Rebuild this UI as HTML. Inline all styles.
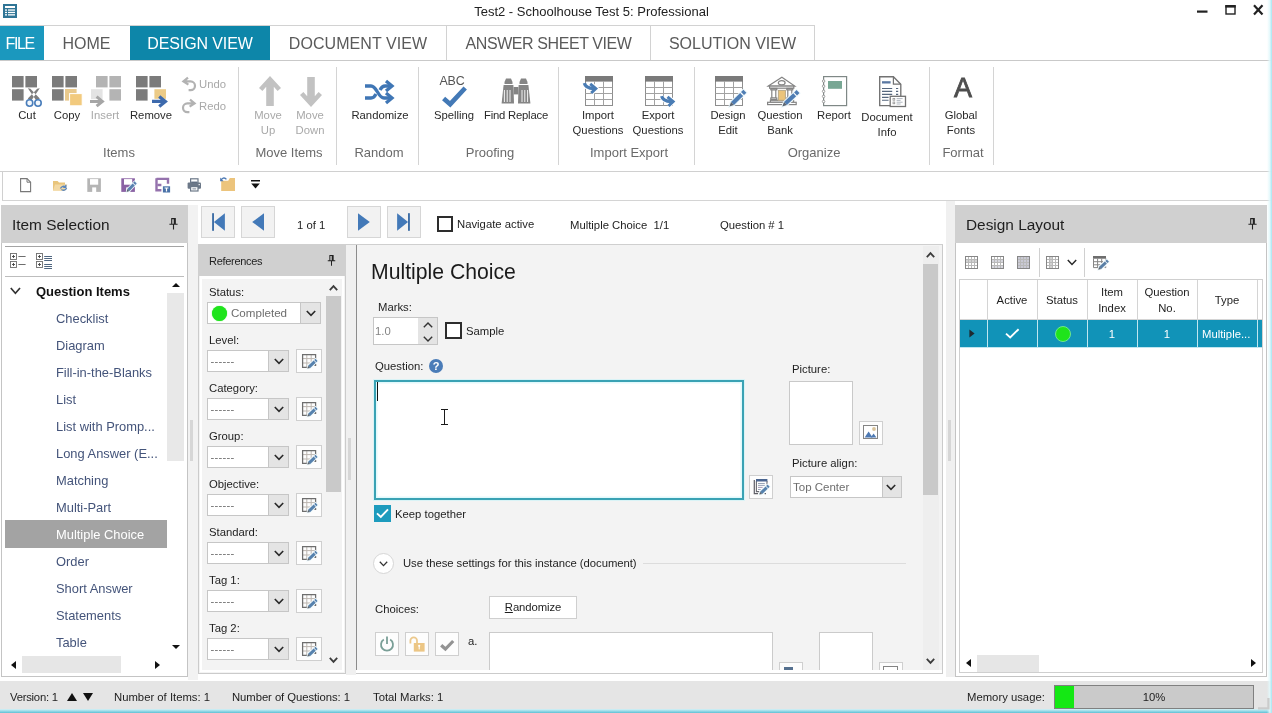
<!DOCTYPE html>
<html lang="en">
<head>
<meta charset="utf-8">
<title>Test2 - Schoolhouse Test 5: Professional</title>
<style>
*{box-sizing:border-box;margin:0;padding:0}
html,body{width:1272px;height:713px;overflow:hidden;background:#fff}
body{font-family:"Liberation Sans",sans-serif;font-size:11.3px;color:#1e1e1e;position:relative;will-change:transform}
.a{position:absolute}
.t{position:absolute;white-space:nowrap;line-height:16px;height:16px}
.c{text-align:center}
svg{position:absolute;overflow:visible}
/* ---------- title / tabs ---------- */
#title{left:0;top:4px;width:1183px;text-align:center;font-size:13px;color:#222}
.tab{position:absolute;top:26px;height:34px;line-height:36px;font-size:16px;color:#5a5a5a;text-align:center;white-space:nowrap}
.tabb{border-top:1px solid #d2d2d2;border-right:1px solid #d2d2d2;top:25px;height:36px;line-height:35px}
/* ---------- ribbon ---------- */
.gsep{position:absolute;top:67px;width:1px;height:98px;background:#d4d4d4}
.glab{position:absolute;top:145px;height:16px;line-height:16px;font-size:13px;color:#6a6a6a;text-align:center;white-space:nowrap}
.rl{position:absolute;margin-top:1px;font-size:11.3px;line-height:15px;color:#2a2a2a;text-align:center;white-space:nowrap}
.dis{color:#a9a9a9}
/* ---------- panels ---------- */
.phead{position:absolute;background:#d0d0d0}
.li{position:absolute;left:56px;font-size:12.9px;line-height:18px;height:18px;color:#44547a;white-space:nowrap}
.lab{position:absolute;font-size:11.3px;line-height:14px;white-space:nowrap;color:#1e1e1e}
.combo{position:absolute;height:22px;background:#fff;border:1px solid #c6c6c6}
.combo i{position:absolute;right:0;top:0;bottom:0;width:20px;background:#e4e4e4;border-left:1px solid #c6c6c6}
.combo span{position:absolute;left:6px;top:3px;line-height:14px;font-size:11.3px;color:#6e6e6e;white-space:nowrap}
.btn{position:absolute;width:24px;height:24px;background:#fdfdfd;border:1px solid #cfcfcf}
.nav{position:absolute;top:206px;width:34px;height:32px;background:#f2f2f2;border:1px solid #d6d6d6}
.st{position:absolute;top:689px;line-height:16px;font-size:11.3px;color:#1e1e1e;white-space:nowrap}
</style>
</head>
<body>
<!-- ================= TITLE BAR ================= -->
<div id="titlebar">
<svg class="a" style="left:3px;top:4px" width="14" height="14" viewBox="0 0 14 14"><rect width="14" height="14" fill="#2f7596"/><rect x="2" y="2" width="10" height="2" fill="#fff"/><rect x="2" y="5.4" width="2" height="1.3" fill="#fff"/><rect x="5" y="5.4" width="7" height="1.3" fill="#fff"/><rect x="2" y="7.8" width="2" height="1.3" fill="#fff"/><rect x="5" y="7.8" width="7" height="1.3" fill="#fff"/><rect x="2" y="10.2" width="2" height="1.3" fill="#fff"/><rect x="5" y="10.2" width="7" height="1.3" fill="#fff"/></svg>
<div class="t" id="title">Test2 - Schoolhouse Test 5: Professional</div>
<svg class="a" style="left:1196px;top:4px" width="70" height="12" viewBox="0 0 70 12"><rect x="1" y="6.5" width="10.5" height="2.2" fill="#222"/><rect x="30" y="2" width="9" height="8" fill="none" stroke="#222" stroke-width="1.4"/><rect x="29.3" y="1" width="10.4" height="2.6" fill="#222"/><path d="M58 1.2 L66.5 10.5 M66.5 1.2 L58 10.5" stroke="#222" stroke-width="2.2" fill="none"/></svg>
</div>
<!-- ================= TABS ================= -->
<div id="tabs">
<div class="a" style="left:0;top:25px;width:815px;height:1px;background:#d2d2d2"></div>
<div class="tab" style="left:0;width:44px;background:#1b98be;color:#fff;text-align:left;padding-left:5.5px;letter-spacing:-1.35px">FILE</div>
<div class="tab" style="left:44px;width:85px">HOME</div>
<div class="tab" style="left:130px;width:140px;background:#0d86a9;color:#fff;letter-spacing:-.12px">DESIGN VIEW</div>
<div class="tab tabb" style="left:270px;width:177px;letter-spacing:.07px">DOCUMENT VIEW</div>
<div class="tab tabb" style="left:447px;width:204px;letter-spacing:-.42px">ANSWER SHEET VIEW</div>
<div class="tab tabb" style="left:651px;width:164px">SOLUTION VIEW</div>
<div class="a" style="left:0;top:60px;width:1272px;height:1px;background:#c9c9c9"></div>
</div>
<!-- ================= RIBBON ================= -->
<div id="ribbon">
<!-- Items group -->
<svg style="left:12px;top:76px" width="32" height="32" viewBox="0 0 32 32"><g fill="#7b7b7b"><rect x="0" y="0" width="11.6" height="11.4"/><rect x="13.4" y="0" width="11.6" height="11.4"/><rect x="0" y="13.2" width="11.6" height="11.4"/></g><path d="M15.8 12.2 L18.4 12.8 L27.8 22.6 L24.6 25 Z M27.8 12.2 L25.2 12.8 L15.8 22.6 L19 25 Z" fill="#7d7d7d"/><circle cx="17.6" cy="27" r="3.2" fill="#f4f8fc" stroke="#4a7ebb" stroke-width="1.6"/><circle cx="26" cy="27" r="3.2" fill="#f4f8fc" stroke="#4a7ebb" stroke-width="1.6"/></svg>
<div class="rl" style="left:7px;top:107px;width:40px">Cut</div>
<svg style="left:52px;top:76px" width="32" height="32" viewBox="0 0 32 32"><g fill="#7b7b7b"><rect x="0" y="0" width="11.6" height="11.4"/><rect x="13.4" y="0" width="11.6" height="11.4"/><rect x="0" y="13.2" width="11.6" height="11.4"/></g><rect x="13" y="13" width="11.6" height="11.6" fill="#e9c98c"/><rect x="17.6" y="17.6" width="12.6" height="12.2" fill="#f2ca7e" stroke="#fff" stroke-width="1"/></svg>
<div class="rl" style="left:47px;top:107px;width:40px">Copy</div>
<svg style="left:90px;top:76px" width="32" height="32" viewBox="0 0 32 32"><g fill="#b4b4b4"><rect x="6" y="0" width="11.6" height="11.4"/><rect x="19.4" y="0" width="11.6" height="11.4"/><rect x="19.4" y="13.2" width="11.6" height="11.4"/></g><rect x="1" y="13.2" width="11.6" height="10" fill="#e3e3e3"/><path d="M0 25.4 H10 M6.6 20.6 L12.4 25.4 L6.6 30.2" stroke="#a6a6a6" stroke-width="3" fill="none"/></svg>
<div class="rl dis" style="left:85px;top:107px;width:40px">Insert</div>
<svg style="left:136px;top:76px" width="32" height="32" viewBox="0 0 32 32"><g fill="#7b7b7b"><rect x="0" y="0" width="11.6" height="11.4"/><rect x="13.4" y="0" width="11.6" height="11.4"/><rect x="0" y="13.2" width="11.6" height="11.4"/></g><rect x="18.4" y="13.2" width="11.6" height="9.6" fill="#eccb87"/><path d="M16 25.4 H27 M23.2 20.4 L29.4 25.4 L23.2 30.4" stroke="#3d6aad" stroke-width="3.2" fill="none"/></svg>
<div class="rl" style="left:126px;top:107px;width:50px">Remove</div>
<svg style="left:182px;top:77px" width="15" height="14" viewBox="0 0 15 14"><path d="M6 0.6 L1.4 4.4 L6.4 7.6 M1.8 4.4 H8.6 A4.4 4.4 0 0 1 8.6 13.2 H6.6" stroke="#b2b2b2" stroke-width="2.2" fill="none"/></svg>
<div class="rl dis" style="left:199px;top:76px;text-align:left">Undo</div>
<svg style="left:181px;top:99px" width="15" height="14" viewBox="0 0 15 14"><path d="M9 0.6 L13.6 4.4 L8.6 7.6 M13.2 4.4 H6.4 A4.4 4.4 0 0 0 6.4 13.2 H8.4" stroke="#b2b2b2" stroke-width="2.2" fill="none"/></svg>
<div class="rl dis" style="left:199px;top:98px;text-align:left">Redo</div>
<div class="glab" style="left:89px;width:60px">Items</div>
<div class="gsep" style="left:238px"></div>
<!-- Move Items group -->
<svg style="left:258px;top:76px" width="24" height="31" viewBox="0 0 24 31"><path d="M12 0 L23 12 L19.6 15 L15.8 10.8 V30 H8.2 V10.8 L4.4 15 L1 12 Z" fill="#c2c2c2"/></svg>
<div class="rl dis" style="left:248px;top:107px;width:40px">Move<br>Up</div>
<svg style="left:299px;top:76px" width="24" height="31" viewBox="0 0 24 31"><path d="M12 31 L23 19 L19.6 16 L15.8 20.2 V1 H8.2 V20.2 L4.4 16 L1 19 Z" fill="#c2c2c2"/></svg>
<div class="rl dis" style="left:290px;top:107px;width:40px">Move<br>Down</div>
<div class="glab" style="left:249px;width:80px">Move Items</div>
<div class="gsep" style="left:336px"></div>
<!-- Random group -->
<svg style="left:365px;top:80px" width="30" height="24" viewBox="0 0 30 24"><g stroke="#3f76b5" stroke-width="3.3" fill="none"><path d="M0 6 H6 C12 6 13 18 19 18 H26"/><path d="M0 18 H6 C8.5 18 10 16 11 14 M15 10 C16 8 17.5 6 20 6 H26"/><path d="M21 1 L27 6 L21 11"/><path d="M21 13 L27 18 L21 23"/></g></svg>
<div class="rl" style="left:345px;top:107px;width:70px">Randomize</div>
<div class="glab" style="left:349px;width:60px">Random</div>
<div class="gsep" style="left:418px"></div>
<!-- Proofing group -->
<div class="t" style="left:436px;top:73px;width:32px;text-align:center;font-size:12.4px;color:#555;letter-spacing:-.2px">ABC</div>
<svg style="left:441px;top:87px" width="26" height="20" viewBox="0 0 26 20"><path d="M2.6 11.4 L9.2 17.2 L24.2 1" stroke="#4379b6" stroke-width="4.7" fill="none"/></svg>
<div class="rl" style="left:424px;top:107px;width:60px">Spelling</div>
<svg style="left:501px;top:78px" width="30" height="26" viewBox="0 0 30 26"><g fill="#858585"><path d="M3.5 4 L5 0.6 H10 L11.5 4 V6 H3.5Z"/><path d="M18.5 4 L20 0.6 H25 L26.5 4 V6 H18.5Z"/><path d="M2.6 7 H12.4 L13 25.4 H0.6 Z"/><path d="M17.6 7 H27.4 L29.4 25.4 H17 Z"/><rect x="12.6" y="9" width="4.8" height="7.4"/></g><g stroke="#fff" stroke-width=".9"><path d="M3.4 12 V24 M6.2 12 V24 M9 12 V24 M21 12 V24 M23.8 12 V24 M26.6 12 V24"/></g></svg>
<div class="rl" style="left:476px;top:107px;width:80px;letter-spacing:-.22px">Find Replace</div>
<div class="glab" style="left:450px;width:80px">Proofing</div>
<div class="gsep" style="left:558px"></div>
<!-- Import Export group -->
<svg style="left:584px;top:76px" width="30" height="31" viewBox="0 0 30 31"><rect x="1.5" y="0.5" width="27" height="29" fill="#fff" stroke="#8e8e8e"/><rect x="1" y="0" width="28" height="5.6" fill="#7a7a7a"/><path d="M1.5 11.5 H28.5 M1.5 17.5 H28.5 M1.5 23.5 H28.5 M10.5 5 V29.5 M19.5 5 V29.5" stroke="#a2a2a2" fill="none"/><g transform="translate(0 0)"><g stroke="#fff" stroke-width="5" fill="none" stroke-linejoin="miter"><path d="M0.4 7.2 C1.2 11 4.8 12.5 10 12.5"/><path d="M6.2 7.8 L11.8 12.5 L7.2 17"/></g><g stroke="#4a7cb4" fill="none" stroke-linejoin="miter" stroke-miterlimit="6"><path d="M0.4 7.2 C1.2 11 4.8 12.5 10 12.5" stroke-width="3.3"/><path d="M6.2 7.8 L11.8 12.5 L7.2 17" stroke-width="3"/></g></g></svg>
<div class="rl" style="left:568px;top:107px;width:60px">Import<br>Questions</div>
<svg style="left:644px;top:76px" width="32" height="31" viewBox="0 0 32 31"><rect x="1.5" y="0.5" width="27" height="29" fill="#fff" stroke="#8e8e8e"/><rect x="1" y="0" width="28" height="5.6" fill="#7a7a7a"/><path d="M1.5 11.5 H28.5 M1.5 17.5 H28.5 M1.5 23.5 H28.5 M10.5 5 V29.5 M19.5 5 V29.5" stroke="#a2a2a2" fill="none"/><g transform="translate(17.3 13)"><g stroke="#fff" stroke-width="5" fill="none" stroke-linejoin="miter"><path d="M0.4 7.2 C1.2 11 4.8 12.5 10 12.5"/><path d="M6.2 7.8 L11.8 12.5 L7.2 17"/></g><g stroke="#4a7cb4" fill="none" stroke-linejoin="miter" stroke-miterlimit="6"><path d="M0.4 7.2 C1.2 11 4.8 12.5 10 12.5" stroke-width="3.3"/><path d="M6.2 7.8 L11.8 12.5 L7.2 17" stroke-width="3"/></g></g></svg>
<div class="rl" style="left:628px;top:107px;width:60px">Export<br>Questions</div>
<div class="glab" style="left:579px;width:100px">Import Export</div>
<div class="gsep" style="left:694px"></div>
<!-- Organize group -->
<svg style="left:714px;top:76px" width="32" height="31" viewBox="0 0 32 31"><rect x="1.5" y="0.5" width="27" height="29" fill="#fff" stroke="#8e8e8e"/><rect x="1" y="0" width="28" height="5.6" fill="#7a7a7a"/><path d="M1.5 11.5 H28.5 M1.5 17.5 H28.5 M1.5 23.5 H28.5 M10.5 5 V29.5 M19.5 5 V29.5" stroke="#a2a2a2" fill="none"/><path d="M15.4 30.6 L17.02 26.03 L29.42 13.71 L32.38 16.69 L19.98 29.01 Z" fill="#fff" stroke="#eef8fb" stroke-width="2"/><path d="M17.02 26.03 L26.16 16.94 L29.13 19.92 L19.98 29.01 Z" fill="#4f7db3"/><path d="M27.02 16.10 L29.42 13.71 L32.38 16.69 L29.98 19.08 Z" fill="#4f7db3"/><path d="M15.4 30.6 L17.02 26.03 L19.98 29.01 Z" fill="#5b6470"/></svg>
<div class="rl" style="left:698px;top:107px;width:60px">Design<br>Edit</div>
<svg style="left:766px;top:76px" width="33" height="31" viewBox="0 0 33 31"><g fill="#fff" stroke="#848484" stroke-width="1.2"><path d="M2.3 10.1 L15.9 1.2 L28.8 10.1 Z"/><ellipse cx="15.7" cy="6.7" rx="3.4" ry="2.1"/><rect x="3.6" y="10.1" width="24.2" height="2.1"/><rect x="5.8" y="13.6" width="4" height="8.6"/><rect x="4.8" y="12.4" width="6" height="1.4"/><rect x="4.8" y="22" width="6" height="1.6"/><rect x="21.8" y="13.6" width="4" height="8.6"/><rect x="20.8" y="12.4" width="6" height="1.4"/><rect x="20.8" y="22" width="6" height="1.6"/><rect x="4.4" y="24.3" width="23.2" height="2"/><rect x="1.6" y="26.3" width="28.6" height="2.3"/></g><rect x="12.4" y="14.4" width="7" height="9.9" fill="#ebc47b" stroke="#b9a988" stroke-width="1"/><path d="M16.3 30.6 L17.99 26.08 L30.55 14.08 L33.45 17.12 L20.89 29.12 Z" fill="#fff" stroke="#eef8fb" stroke-width="2"/><path d="M17.99 26.08 L27.25 17.23 L30.15 20.27 L20.89 29.12 Z" fill="#4f7db3"/><path d="M28.12 16.41 L30.55 14.08 L33.45 17.12 L31.02 19.44 Z" fill="#4f7db3"/><path d="M16.3 30.6 L17.99 26.08 L20.89 29.12 Z" fill="#5b6470"/></svg>
<div class="rl" style="left:750px;top:107px;width:60px">Question<br>Bank</div>
<svg style="left:821px;top:76px" width="28" height="31" viewBox="0 0 28 31"><rect x="2.6" y="0.6" width="23" height="29" fill="#fff" stroke="#7f8886" stroke-width="1.2"/><rect x="7" y="5" width="14" height="7.8" fill="#78a794"/><g fill="#fff" stroke="#8a8a8a" stroke-width=".8"><circle cx="2.6" cy="5.1" r="1.25"/><circle cx="2.6" cy="10.2" r="1.25"/><circle cx="2.6" cy="15.3" r="1.25"/><circle cx="2.6" cy="20.4" r="1.25"/><circle cx="2.6" cy="25.5" r="1.25"/></g></svg>
<div class="rl" style="left:804px;top:107px;width:60px">Report</div>
<svg style="left:879px;top:76px" width="28" height="31" viewBox="0 0 28 31"><path d="M0.7 0.7 H14.4 L21.8 8.2 V29.6 H0.7 Z" fill="#fff" stroke="#727272" stroke-width="1.35"/><path d="M14.4 0.7 V8.2 H21.8" fill="none" stroke="#727272" stroke-width="1.2"/><rect x="3" y="5.2" width="8.6" height="2.3" fill="#5a78a2"/><path d="M3 12.5 H13.2 M3 15.4 H13.2 M3 18.4 H13.2 M3 21.4 H9.6 M3 24.3 H9.6 M17 12.5 H19.2 M17 15.4 H19.2 M17 18.4 H19.2" stroke="#56677d" stroke-width="1.1"/><rect x="11.2" y="20.3" width="15.3" height="10.2" fill="#fff" stroke="#727272" stroke-width="1.3"/><rect x="14" y="22.4" width="1.8" height="1.8" fill="none" stroke="#8a8a8a" stroke-width=".7"/><rect x="14" y="26" width="1.8" height="1.8" fill="none" stroke="#8a8a8a" stroke-width=".7"/><path d="M17.6 22.6 H23.6 M17.6 24.4 H21.6 M17.6 26.2 H23.6 M17.6 28 H21.6" stroke="#9aa3ad" stroke-width=".8"/></svg>
<div class="rl" style="left:852px;top:109px;width:70px">Document<br>Info</div>
<div class="glab" style="left:774px;width:80px">Organize</div>
<div class="gsep" style="left:929px"></div>
<!-- Format group -->
<div class="t" style="left:943px;top:72px;width:40px;height:32px;line-height:32px;text-align:center;font-size:27px;font-weight:400;color:#4e4e4e;-webkit-text-stroke:.8px #4e4e4e">A</div>
<div class="rl" style="left:931px;top:107px;width:60px">Global<br>Fonts</div>
<div class="glab" style="left:933px;width:60px">Format</div>
<div class="gsep" style="left:993px"></div>

<div class="a" style="left:0;top:171px;width:1272px;height:1px;background:#d0d0d0"></div>
</div>
<!-- ================= QUICK TOOLBAR ================= -->
<div id="qbar">
<div class="a" style="left:2px;top:171px;width:1px;height:29px;background:#d0d0d0"></div>
<div class="a" style="left:2px;top:200px;width:1270px;height:1px;background:#d4d4d4"></div>
<svg style="left:20px;top:178px" width="12" height="15" viewBox="0 0 12 15"><path d="M0.6 0.6 H7 L10.6 4.2 V13.6 H0.6 Z" fill="#fff" stroke="#787878" stroke-width="1.1"/><path d="M7 0.6 V4.2 H10.6" fill="none" stroke="#787878" stroke-width="1"/></svg>
<svg style="left:52px;top:179px" width="17" height="13" viewBox="0 0 17 13"><path d="M1 2 H5.6 L7 3.6 H13 V11.6 H1 Z" fill="#e9c57c"/><path d="M3 5.4 H15.4 L13 11.6 H1 Z" fill="#f3d9a4"/><path d="M8.4 9.6 C9.6 7 12 6.6 13.6 8 M13.8 5.8 V8.4 H11.2" stroke="#5a86bd" stroke-width="1.3" fill="none"/><path d="M14.6 9 C13.6 11.4 11 11.8 9.4 10.6" stroke="#5a86bd" stroke-width="1.3" fill="none"/></svg>
<svg style="left:87px;top:178px" width="15" height="15" viewBox="0 0 15 15"><rect x="0.3" y="0.3" width="13.6" height="13.6" fill="#b5b5b5"/><rect x="3" y="1.1" width="8.2" height="5.6" fill="#fff"/><rect x="5.2" y="9.4" width="4" height="4.6" fill="#fff"/></svg>
<svg style="left:121px;top:178px" width="16" height="15" viewBox="0 0 16 15"><rect x="0.3" y="0.3" width="13.6" height="13.6" fill="#8a62a4"/><rect x="3" y="1.1" width="8.2" height="5.6" fill="#fff"/><rect x="5.2" y="9.4" width="4" height="4.6" fill="#fff"/><path d="M5.6 14 L6.31 11.05 L13.51 3.37 L15.69 5.43 L8.49 13.11 Z" fill="#fff" stroke="#eef8fb" stroke-width="1.6"/><path d="M6.31 11.05 L11.62 5.39 L13.80 7.44 L8.49 13.11 Z" fill="#5a80b0"/><path d="M12.11 4.86 L13.51 3.37 L15.69 5.43 L14.30 6.91 Z" fill="#5a80b0"/><path d="M5.6 14 L6.31 11.05 L8.49 13.11 Z" fill="#5b6470"/></svg>
<svg style="left:155px;top:178px" width="17" height="16" viewBox="0 0 17 16"><path d="M1.5 0.9 H13 V5.8 M1.5 0.2 V12.2 H6.4 M2.8 7 H6.4" stroke="#9572ad" stroke-width="2.4" fill="none"/><rect x="7.9" y="8.3" width="7.2" height="6.2" fill="#4a72a8"/><path d="M9.6 10 H13.4 M11.5 10 V13.6" stroke="#fff" stroke-width="1.2"/></svg>
<svg style="left:187px;top:178px" width="15" height="14" viewBox="0 0 15 14"><rect x="3.6" y="0.8" width="7.4" height="4.6" fill="#fff" stroke="#6c7888" stroke-width="1.2"/><rect x="4.2" y="3.6" width="6.2" height="1.8" fill="#56657a"/><rect x="0.6" y="4.6" width="13.4" height="6.2" rx="1" fill="#6c7888"/><rect x="3.6" y="8.6" width="7.4" height="4.4" fill="#fff" stroke="#6c7888" stroke-width="1.2"/><path d="M5.4 10.9 H9.2" stroke="#6c7888" stroke-width=".9"/><rect x="11.6" y="6" width="1.2" height="1.2" fill="#fff"/></svg>
<svg style="left:220px;top:176px" width="16" height="15" viewBox="0 0 16 15"><path d="M1.2 4.7 H8.2 L9.8 2.1 H15 V14.9 H1.2 Z" fill="#ecc47c"/><path d="M1 5 C1.4 2 4.6 1 6.4 3.4" stroke="#4d79b3" stroke-width="1.4" fill="none"/><path d="M0.2 1.6 V5.2 H3.6 Z" fill="#4d79b3"/></svg>
<svg style="left:250px;top:180px" width="11" height="9" viewBox="0 0 11 9"><rect x="1" y="0" width="9" height="1.5" fill="#111"/><path d="M1.2 3.4 H9.8 L5.5 8.4 Z" fill="#111"/></svg>

</div>
<!-- ================= LEFT PANEL ================= -->
<div id="left">
<div class="a" style="left:188px;top:205px;width:10px;height:475px;background:#f2f2f2"></div>
<div class="a" style="left:190px;top:420px;width:3px;height:41px;background:#d6d6d6"></div>
<div class="a" style="left:1px;top:205px;width:187px;height:472px;background:#fff;border:1px solid #c4c4c4"></div>
<div class="phead" style="left:1px;top:205px;width:187px;height:38px"></div>
<div class="t" style="left:12px;top:215px;font-size:15.4px;line-height:20px;height:20px;color:#1e1e1e">Item Selection</div>
<svg style="left:169px;top:218px" width="9" height="12" viewBox="0 0 9 12"><path d="M2.2 0.6 H6.8 M2.7 0.6 V6 M6.3 0.6 V6 M5.3 0.6 V6 M0.4 6.2 H8.6 M4.5 6.2 V11.6" stroke="#222" stroke-width="1.1" fill="none"/></svg>
<div class="a" style="left:5px;top:246px;width:179px;height:1px;background:#a4a4a4"></div>
<div class="a" style="left:5px;top:276px;width:179px;height:1px;background:#bdbdbd"></div>
<svg style="left:10px;top:253px" width="16" height="15" viewBox="0 0 16 15"><g fill="#fff" stroke="#6e6e6e" stroke-width=".9"><rect x=".5" y=".5" width="6" height="6"/><rect x=".5" y="8.5" width="6" height="6"/></g><path d="M2 3.5 H5 M3.5 2 V5 M2 11.5 H5 M3.5 10 V13" stroke="#444" stroke-width=".9"/><path d="M8.4 3.5 H15.6 M8.4 11.5 H15.6" stroke="#6e6e6e" stroke-width="1"/></svg>
<svg style="left:36px;top:253px" width="17" height="16" viewBox="0 0 17 16"><g fill="#fff" stroke="#6e6e6e" stroke-width=".9"><rect x=".5" y=".5" width="6" height="6"/><rect x=".5" y="8.5" width="6" height="6"/></g><path d="M2 3.5 H5 M3.5 2 V5 M2 11.5 H5 M3.5 10 V13" stroke="#444" stroke-width=".9"/><path d="M8.2 3.5 H16 M8.2 5.5 H16 M8.2 7.5 H16 M8.2 11.5 H16 M8.2 13.5 H16 M8.2 15.5 H16" stroke="#4f6680" stroke-width="1"/></svg>
<svg style="left:10px;top:287px" width="11" height="8" viewBox="0 0 11 8"><path d="M0.8 1 L5.4 6.2 L10 1" stroke="#333" stroke-width="1.7" fill="none"/></svg>
<div class="t" style="left:36px;top:283px;font-size:13px;font-weight:700;line-height:18px;height:18px;color:#111">Question Items</div>
<div class="a" style="left:5px;top:520px;width:162px;height:28px;background:#a3a3a3"></div>
<div class="li" style="top:310px">Checklist</div>
<div class="li" style="top:337px">Diagram</div>
<div class="li" style="top:364px">Fill-in-the-Blanks</div>
<div class="li" style="top:391px">List</div>
<div class="li" style="top:418px">List with Promp...</div>
<div class="li" style="top:445px">Long Answer (E...</div>
<div class="li" style="top:472px">Matching</div>
<div class="li" style="top:499px">Multi-Part</div>
<div class="li" style="top:526px;color:#fff">Multiple Choice</div>
<div class="li" style="top:553px">Order</div>
<div class="li" style="top:580px">Short Answer</div>
<div class="li" style="top:607px">Statements</div>
<div class="li" style="top:634px">Table</div>
<div class="a" style="left:167px;top:293px;width:17px;height:168px;background:#e8e8e8"></div>
<svg style="left:172px;top:283px" width="8" height="4" viewBox="0 0 8 4"><path d="M0 4 L4 0 L8 4Z" fill="#111"/></svg>
<svg style="left:172px;top:645px" width="8" height="4" viewBox="0 0 8 4"><path d="M0 0 L4 4 L8 0Z" fill="#111"/></svg>
<div class="a" style="left:22px;top:656px;width:99px;height:17px;background:#e6e6e6"></div>
<svg style="left:11px;top:661px" width="5" height="8" viewBox="0 0 5 8"><path d="M5 0 L0 4 L5 8Z" fill="#111"/></svg>
<svg style="left:155px;top:661px" width="5" height="8" viewBox="0 0 5 8"><path d="M0 0 L5 4 L0 8Z" fill="#111"/></svg>
</div>
<!-- ================= CENTER ================= -->
<div id="center">
<div class="nav" style="left:201px"></div>
<svg style="left:212px;top:213px" width="13" height="18" viewBox="0 0 13 18"><rect x="0.1" y="0.2" width="1.9" height="17.6" fill="#3f6ea6"/><path d="M12.9 0.2 V17.8 L1.9 9 Z" fill="#4379b8"/></svg>
<div class="nav" style="left:241px"></div>
<svg style="left:252px;top:213px" width="12" height="18" viewBox="0 0 12 18"><path d="M12 0.2 V17.8 L0.2 9 Z" fill="#4379b8"/></svg>
<div class="nav" style="left:347px"></div>
<svg style="left:358px;top:213px" width="12" height="18" viewBox="0 0 12 18"><path d="M0 0.2 V17.8 L11.8 9 Z" fill="#4379b8"/></svg>
<div class="nav" style="left:387px"></div>
<svg style="left:397px;top:213px" width="13" height="18" viewBox="0 0 13 18"><rect x="11" y="0.2" width="1.9" height="17.6" fill="#3f6ea6"/><path d="M0.1 0.2 V17.8 L11.1 9 Z" fill="#4379b8"/></svg>
<div class="lab" style="left:297px;top:218px">1 of 1</div>
<div class="a" style="left:437px;top:216px;width:16px;height:16px;background:#fff;border:2px solid #2d2d2d"></div>
<div class="lab" style="left:457px;top:217px">Navigate active</div>
<div class="lab" style="left:570px;top:218px;white-space:pre">Multiple Choice  1/1</div>
<div class="lab" style="left:720px;top:218px">Question # 1</div>
<div class="a" style="left:198px;top:244px;width:148px;height:430px;background:#f3f3f3;border:1.5px solid #cbcbcb"></div>
<div class="a" style="left:200px;top:276px;width:144px;height:396px;border:2px solid #fff;border-top-width:3px"></div>
<div class="phead" style="left:198px;top:244px;width:148px;height:32px"></div>
<div class="lab" style="left:209px;top:254px;font-size:11px;letter-spacing:-.3px">References</div>
<svg style="left:327px;top:255px" width="9" height="11" viewBox="0 0 9 12"><path d="M2.2 0.6 H6.8 M2.7 0.6 V6 M6.3 0.6 V6 M5.3 0.6 V6 M0.4 6.2 H8.6 M4.5 6.2 V11.6" stroke="#222" stroke-width="1.1" fill="none"/></svg>
<div class="lab" style="left:209px;top:285px">Status:</div>
<div class="combo" style="left:207px;top:302px;width:114px"><i></i><span style="left:23px;font-size:11.6px">Completed</span></div>
<div class="a" style="left:212px;top:305.5px;width:15px;height:15px;border-radius:50%;background:#1fe41c;box-shadow:0 0 1px #1fe41c"></div>
<svg style="left:306px;top:310px" width="10" height="7" viewBox="0 0 10 7"><path d="M0.8 1 L5 5.4 L9.2 1" stroke="#2a2a2a" stroke-width="1.6" fill="none"/></svg>
<div class="lab" style="left:209px;top:333px">Level:</div>
<div class="combo" style="left:207px;top:350px;width:82px"><i></i><span style="left:2.6px;letter-spacing:.2px">------</span></div>
<svg style="left:274px;top:358px" width="10" height="7" viewBox="0 0 10 7"><path d="M0.8 1 L5 5.4 L9.2 1" stroke="#2a2a2a" stroke-width="1.6" fill="none"/></svg>
<div class="btn" style="left:296px;top:349px;width:26px;height:24px"></div>
<svg style="left:302px;top:354px" width="16" height="15" viewBox="0 0 16 15"><path d="M0.6 4.6 H13 M0.6 9 H8 M4.8 1 V13 M9.2 1 V8" stroke="#bdb7b1" stroke-width="1" fill="none"/><path d="M0.6 0.6 H13.6 V5 M0.6 0 V13.4 H5 M13.6 10 V11.4 H12.4" stroke="#6e6e6e" stroke-width="1.25" fill="none"/><path d="M5.3 14.6 L6.17 11.7 L11.72 6.5 L13.47 4.87 L15.53 7.07 L13.78 8.7 L8.23 13.9 Z" fill="#fff" stroke="#eef8fb" stroke-width="1.6"/><path d="M6.17 11.7 L11.72 6.5 L13.78 8.7 L8.23 13.9 Z" fill="#5681ad"/><path d="M12.23 6.03 L13.47 4.87 L15.53 7.07 L14.29 8.22 Z" fill="#5681ad"/><path d="M5.3 14.6 L6.17 11.7 L8.23 13.9 Z" fill="#5b6470"/></svg>
<div class="lab" style="left:209px;top:381px">Category:</div>
<div class="combo" style="left:207px;top:398px;width:82px"><i></i><span style="left:2.6px;letter-spacing:.2px">------</span></div>
<svg style="left:274px;top:406px" width="10" height="7" viewBox="0 0 10 7"><path d="M0.8 1 L5 5.4 L9.2 1" stroke="#2a2a2a" stroke-width="1.6" fill="none"/></svg>
<div class="btn" style="left:296px;top:397px;width:26px;height:24px"></div>
<svg style="left:302px;top:402px" width="16" height="15" viewBox="0 0 16 15"><path d="M0.6 4.6 H13 M0.6 9 H8 M4.8 1 V13 M9.2 1 V8" stroke="#bdb7b1" stroke-width="1" fill="none"/><path d="M0.6 0.6 H13.6 V5 M0.6 0 V13.4 H5 M13.6 10 V11.4 H12.4" stroke="#6e6e6e" stroke-width="1.25" fill="none"/><path d="M5.3 14.6 L6.17 11.7 L11.72 6.5 L13.47 4.87 L15.53 7.07 L13.78 8.7 L8.23 13.9 Z" fill="#fff" stroke="#eef8fb" stroke-width="1.6"/><path d="M6.17 11.7 L11.72 6.5 L13.78 8.7 L8.23 13.9 Z" fill="#5681ad"/><path d="M12.23 6.03 L13.47 4.87 L15.53 7.07 L14.29 8.22 Z" fill="#5681ad"/><path d="M5.3 14.6 L6.17 11.7 L8.23 13.9 Z" fill="#5b6470"/></svg>
<div class="lab" style="left:209px;top:429px">Group:</div>
<div class="combo" style="left:207px;top:446px;width:82px"><i></i><span style="left:2.6px;letter-spacing:.2px">------</span></div>
<svg style="left:274px;top:454px" width="10" height="7" viewBox="0 0 10 7"><path d="M0.8 1 L5 5.4 L9.2 1" stroke="#2a2a2a" stroke-width="1.6" fill="none"/></svg>
<div class="btn" style="left:296px;top:445px;width:26px;height:24px"></div>
<svg style="left:302px;top:450px" width="16" height="15" viewBox="0 0 16 15"><path d="M0.6 4.6 H13 M0.6 9 H8 M4.8 1 V13 M9.2 1 V8" stroke="#bdb7b1" stroke-width="1" fill="none"/><path d="M0.6 0.6 H13.6 V5 M0.6 0 V13.4 H5 M13.6 10 V11.4 H12.4" stroke="#6e6e6e" stroke-width="1.25" fill="none"/><path d="M5.3 14.6 L6.17 11.7 L11.72 6.5 L13.47 4.87 L15.53 7.07 L13.78 8.7 L8.23 13.9 Z" fill="#fff" stroke="#eef8fb" stroke-width="1.6"/><path d="M6.17 11.7 L11.72 6.5 L13.78 8.7 L8.23 13.9 Z" fill="#5681ad"/><path d="M12.23 6.03 L13.47 4.87 L15.53 7.07 L14.29 8.22 Z" fill="#5681ad"/><path d="M5.3 14.6 L6.17 11.7 L8.23 13.9 Z" fill="#5b6470"/></svg>
<div class="lab" style="left:209px;top:477px">Objective:</div>
<div class="combo" style="left:207px;top:494px;width:82px"><i></i><span style="left:2.6px;letter-spacing:.2px">------</span></div>
<svg style="left:274px;top:502px" width="10" height="7" viewBox="0 0 10 7"><path d="M0.8 1 L5 5.4 L9.2 1" stroke="#2a2a2a" stroke-width="1.6" fill="none"/></svg>
<div class="btn" style="left:296px;top:493px;width:26px;height:24px"></div>
<svg style="left:302px;top:498px" width="16" height="15" viewBox="0 0 16 15"><path d="M0.6 4.6 H13 M0.6 9 H8 M4.8 1 V13 M9.2 1 V8" stroke="#bdb7b1" stroke-width="1" fill="none"/><path d="M0.6 0.6 H13.6 V5 M0.6 0 V13.4 H5 M13.6 10 V11.4 H12.4" stroke="#6e6e6e" stroke-width="1.25" fill="none"/><path d="M5.3 14.6 L6.17 11.7 L11.72 6.5 L13.47 4.87 L15.53 7.07 L13.78 8.7 L8.23 13.9 Z" fill="#fff" stroke="#eef8fb" stroke-width="1.6"/><path d="M6.17 11.7 L11.72 6.5 L13.78 8.7 L8.23 13.9 Z" fill="#5681ad"/><path d="M12.23 6.03 L13.47 4.87 L15.53 7.07 L14.29 8.22 Z" fill="#5681ad"/><path d="M5.3 14.6 L6.17 11.7 L8.23 13.9 Z" fill="#5b6470"/></svg>
<div class="lab" style="left:209px;top:525px">Standard:</div>
<div class="combo" style="left:207px;top:542px;width:82px"><i></i><span style="left:2.6px;letter-spacing:.2px">------</span></div>
<svg style="left:274px;top:550px" width="10" height="7" viewBox="0 0 10 7"><path d="M0.8 1 L5 5.4 L9.2 1" stroke="#2a2a2a" stroke-width="1.6" fill="none"/></svg>
<div class="btn" style="left:296px;top:541px;width:26px;height:24px"></div>
<svg style="left:302px;top:546px" width="16" height="15" viewBox="0 0 16 15"><path d="M0.6 4.6 H13 M0.6 9 H8 M4.8 1 V13 M9.2 1 V8" stroke="#bdb7b1" stroke-width="1" fill="none"/><path d="M0.6 0.6 H13.6 V5 M0.6 0 V13.4 H5 M13.6 10 V11.4 H12.4" stroke="#6e6e6e" stroke-width="1.25" fill="none"/><path d="M5.3 14.6 L6.17 11.7 L11.72 6.5 L13.47 4.87 L15.53 7.07 L13.78 8.7 L8.23 13.9 Z" fill="#fff" stroke="#eef8fb" stroke-width="1.6"/><path d="M6.17 11.7 L11.72 6.5 L13.78 8.7 L8.23 13.9 Z" fill="#5681ad"/><path d="M12.23 6.03 L13.47 4.87 L15.53 7.07 L14.29 8.22 Z" fill="#5681ad"/><path d="M5.3 14.6 L6.17 11.7 L8.23 13.9 Z" fill="#5b6470"/></svg>
<div class="lab" style="left:209px;top:573px">Tag 1:</div>
<div class="combo" style="left:207px;top:590px;width:82px"><i></i><span style="left:2.6px;letter-spacing:.2px">------</span></div>
<svg style="left:274px;top:598px" width="10" height="7" viewBox="0 0 10 7"><path d="M0.8 1 L5 5.4 L9.2 1" stroke="#2a2a2a" stroke-width="1.6" fill="none"/></svg>
<div class="btn" style="left:296px;top:589px;width:26px;height:24px"></div>
<svg style="left:302px;top:594px" width="16" height="15" viewBox="0 0 16 15"><path d="M0.6 4.6 H13 M0.6 9 H8 M4.8 1 V13 M9.2 1 V8" stroke="#bdb7b1" stroke-width="1" fill="none"/><path d="M0.6 0.6 H13.6 V5 M0.6 0 V13.4 H5 M13.6 10 V11.4 H12.4" stroke="#6e6e6e" stroke-width="1.25" fill="none"/><path d="M5.3 14.6 L6.17 11.7 L11.72 6.5 L13.47 4.87 L15.53 7.07 L13.78 8.7 L8.23 13.9 Z" fill="#fff" stroke="#eef8fb" stroke-width="1.6"/><path d="M6.17 11.7 L11.72 6.5 L13.78 8.7 L8.23 13.9 Z" fill="#5681ad"/><path d="M12.23 6.03 L13.47 4.87 L15.53 7.07 L14.29 8.22 Z" fill="#5681ad"/><path d="M5.3 14.6 L6.17 11.7 L8.23 13.9 Z" fill="#5b6470"/></svg>
<div class="lab" style="left:209px;top:621px">Tag 2:</div>
<div class="combo" style="left:207px;top:638px;width:82px"><i></i><span style="left:2.6px;letter-spacing:.2px">------</span></div>
<svg style="left:274px;top:646px" width="10" height="7" viewBox="0 0 10 7"><path d="M0.8 1 L5 5.4 L9.2 1" stroke="#2a2a2a" stroke-width="1.6" fill="none"/></svg>
<div class="btn" style="left:296px;top:637px;width:26px;height:24px"></div>
<svg style="left:302px;top:642px" width="16" height="15" viewBox="0 0 16 15"><path d="M0.6 4.6 H13 M0.6 9 H8 M4.8 1 V13 M9.2 1 V8" stroke="#bdb7b1" stroke-width="1" fill="none"/><path d="M0.6 0.6 H13.6 V5 M0.6 0 V13.4 H5 M13.6 10 V11.4 H12.4" stroke="#6e6e6e" stroke-width="1.25" fill="none"/><path d="M5.3 14.6 L6.17 11.7 L11.72 6.5 L13.47 4.87 L15.53 7.07 L13.78 8.7 L8.23 13.9 Z" fill="#fff" stroke="#eef8fb" stroke-width="1.6"/><path d="M6.17 11.7 L11.72 6.5 L13.78 8.7 L8.23 13.9 Z" fill="#5681ad"/><path d="M12.23 6.03 L13.47 4.87 L15.53 7.07 L14.29 8.22 Z" fill="#5681ad"/><path d="M5.3 14.6 L6.17 11.7 L8.23 13.9 Z" fill="#5b6470"/></svg>
<div class="a" style="left:326px;top:296px;width:15px;height:196px;background:#c9c9c9"></div>
<svg style="left:329px;top:285px" width="9" height="6" viewBox="0 0 9 6"><path d="M0.8 5.2 L4.5 1.2 L8.2 5.2" stroke="#3c3c3c" stroke-width="1.8" fill="none"/></svg>
<svg style="left:329px;top:657px" width="9" height="6" viewBox="0 0 9 6"><path d="M0.8 0.8 L4.5 4.8 L8.2 0.8" stroke="#3c3c3c" stroke-width="1.8" fill="none"/></svg>
<div class="a" style="left:346px;top:245px;width:10px;height:430px;background:#f0f0f0"></div>
<div class="a" style="left:348px;top:438px;width:3px;height:42px;background:#d6d6d6"></div>
<div class="a" style="left:345px;top:244px;width:598px;height:1px;background:#cfcfcf"></div>
<div class="a" style="left:356px;top:245px;width:587px;height:429px;background:#fff;border-right:1px solid #cbcbcb;border-bottom:1px solid #cbcbcb"></div>
<div class="a" style="left:356px;top:245px;width:586px;height:425px;background:#f3f3f3;border-left:1.5px solid #8c8c8c"></div>
<div class="t" style="left:371px;top:259px;font-size:21.2px;line-height:26px;height:26px;color:#1a1a1a">Multiple Choice</div>
<div class="lab" style="left:378px;top:300px">Marks:</div>
<div class="combo" style="left:373px;top:317px;width:65px;height:28px"><i style="width:19px;border-left:none"></i><span style="left:1px;top:6px;font-size:11.3px;color:#858585">1.0</span></div>
<svg style="left:423px;top:322px" width="10" height="6" viewBox="0 0 10 6"><path d="M0.8 5.2 L5 1 L9.2 5.2" stroke="#333" stroke-width="1.4" fill="none"/></svg>
<svg style="left:423px;top:336px" width="10" height="6" viewBox="0 0 10 6"><path d="M0.8 0.8 L5 5 L9.2 0.8" stroke="#333" stroke-width="1.4" fill="none"/></svg>
<div class="a" style="left:445px;top:322px;width:17px;height:17px;background:#fff;border:2px solid #2d2d2d"></div>
<div class="lab" style="left:466px;top:324px">Sample</div>
<div class="lab" style="left:375px;top:359px">Question:</div>
<div class="a c" style="left:429px;top:359px;width:14px;height:14px;border-radius:50%;background:#4a7cb8;color:#fff;font-size:11px;font-weight:700;line-height:14.5px">?</div>
<div class="a" style="left:374px;top:380px;width:370px;height:120px;background:#fff;border:2px solid #3aa2b4;box-shadow:0 0 0 1px #d9f3f6,inset 0 0 0 1.5px #e2f9fc"></div>
<div class="a" style="left:377px;top:382px;width:1.2px;height:19px;background:#111"></div>
<div class="a" style="left:441px;top:409px;width:7px;height:1.3px;background:#1a1a1a"></div><div class="a" style="left:441px;top:424px;width:7px;height:1.3px;background:#1a1a1a"></div><div class="a" style="left:444px;top:409px;width:1.3px;height:16px;background:#1a1a1a"></div>
<div class="btn" style="left:749px;top:475px"></div>
<svg style="left:753px;top:479px" width="17" height="16" viewBox="0 0 17 16"><path d="M1.3 1 V14.6 H5 M11.6 14.6 H13" stroke="#5f5f66" stroke-width="1.2" fill="none"/><path d="M3.4 2 V12.6 H6.4 M14 2 V5.4" stroke="#6a6a72" stroke-width="1.1" fill="none"/><rect x="3" y="0" width="11.4" height="2.5" fill="#4a6590"/><path d="M5 4.5 H11.8 M5 6.4 H11.8" stroke="#8d9bb0" stroke-width=".9"/><path d="M5 8.4 H9.6" stroke="#9a90b0" stroke-width=".9"/><path d="M5 10.5 H7.7" stroke="#8d9bb0" stroke-width=".9"/><path d="M6.3 15.6 L7.12 12.74 L14.56 5.62 L16.64 7.78 L9.20 14.90 Z" fill="#fff" stroke="#eef8fb" stroke-width="1.6"/><path d="M7.12 12.74 L12.61 7.49 L14.68 9.65 L9.20 14.90 Z" fill="#5681ad"/><path d="M13.12 7.00 L14.56 5.62 L16.64 7.78 L15.20 9.16 Z" fill="#5681ad"/><path d="M6.3 15.6 L7.12 12.74 L9.20 14.90 Z" fill="#5b6470"/></svg>
<div class="lab" style="left:792px;top:362px">Picture:</div>
<div class="a" style="left:789px;top:381px;width:64px;height:64px;background:#fff;border:1px solid #c9c9c9"></div>
<div class="btn" style="left:859px;top:421px"></div>
<svg style="left:863px;top:425px" width="15" height="14" viewBox="0 0 15 14"><rect x="0.5" y="0.5" width="14" height="13" fill="#fff" stroke="#848484"/><circle cx="11" cy="4" r="1.9" fill="#d9c39a"/><path d="M1.6 12.4 L5.6 6.4 L9.6 12.4 Z" fill="#4d79b3"/><path d="M7.6 12.4 L10.6 8.4 L13.4 12.4 Z" fill="#4d79b3"/></svg>
<div class="lab" style="left:792px;top:456px">Picture align:</div>
<div class="combo" style="left:790px;top:476px;width:112px"><i style="width:19.5px"></i><span style="left:2px;top:3px;font-size:11.5px">Top Center</span></div>
<svg style="left:886px;top:484px" width="10" height="7" viewBox="0 0 10 7"><path d="M0.8 1 L5 5.4 L9.2 1" stroke="#2a2a2a" stroke-width="1.6" fill="none"/></svg>
<div class="a" style="left:374px;top:505px;width:17px;height:17px;background:#1d9bbd"></div>
<svg style="left:376px;top:508px" width="13" height="11" viewBox="0 0 13 11"><path d="M1 5.4 L4.8 9 L12 1.4" stroke="#fff" stroke-width="1.9" fill="none"/></svg>
<div class="lab" style="left:395px;top:507px">Keep together</div>
<div class="a" style="left:373px;top:553px;width:21px;height:21px;border-radius:50%;background:#fff;border:1px solid #d6d6d6"></div>
<svg style="left:379px;top:561px" width="9" height="6" viewBox="0 0 9 6"><path d="M0.8 0.8 L4.5 4.6 L8.2 0.8" stroke="#333" stroke-width="1.3" fill="none"/></svg>
<div class="lab" style="left:403px;top:556px;letter-spacing:-.04px">Use these settings for this instance (document)</div>
<div class="a" style="left:643px;top:563px;width:263px;height:1px;background:#dcdcdc"></div>
<div class="lab" style="left:375px;top:602px">Choices:</div>
<div class="a" style="left:489px;top:596px;width:88px;height:23px;background:#fff;border:1px solid #cfcfcf"></div>
<div class="lab c" style="left:489px;top:600px;width:88px;letter-spacing:-.08px"><span style="text-decoration:underline">R</span>andomize</div>
<div class="btn" style="left:375px;top:632px"></div><div class="btn" style="left:405px;top:632px"></div><div class="btn" style="left:435px;top:632px"></div>
<svg style="left:379px;top:636px" width="16" height="16" viewBox="0 0 16 16"><path d="M4.8 3.6 A6 6 0 1 0 11.2 3.6" stroke="#7a9f97" stroke-width="1.8" fill="none"/><path d="M8 0.6 V8" stroke="#7a9f97" stroke-width="1.8"/></svg>
<svg style="left:409px;top:635px" width="16" height="17" viewBox="0 0 16 17"><path d="M1.4 8.6 V5.6 A3.3 3.3 0 0 1 8 5.6 V8" stroke="#ecc98d" stroke-width="1.8" fill="none"/><rect x="4.8" y="8" width="10.8" height="8.6" fill="#ecc685"/><circle cx="10.2" cy="10.8" r="1.1" fill="#fff"/><rect x="9.7" y="11" width="1" height="3.4" fill="#fff"/></svg>
<svg style="left:440px;top:639px" width="15" height="12" viewBox="0 0 15 12"><path d="M1.2 6.2 L5.4 10 L13.2 2" stroke="#939393" stroke-width="3.2" fill="none"/></svg>
<div class="lab" style="left:468px;top:634px">a.</div>
<div class="a" style="left:489px;top:632px;width:284px;height:38px;background:#fff;border:1px solid #cbcbcb;border-bottom:none"></div>
<div class="a" style="left:819px;top:632px;width:54px;height:38px;background:#fff;border:1px solid #cbcbcb;border-bottom:none"></div>
<div class="btn" style="left:779px;top:662px;height:8px;border-bottom:none"></div>
<div class="a" style="left:784px;top:667px;width:9px;height:3px;background:#55708f"></div>
<div class="btn" style="left:879px;top:662px;height:8px;border-bottom:none"></div>
<div class="a" style="left:883px;top:666px;width:15px;height:4px;border:1px solid #848484;border-bottom:none;background:#fff"></div>
<div class="a" style="left:923px;top:246px;width:16px;height:424px;background:#eeeeee"></div>
<div class="a" style="left:923px;top:264px;width:15px;height:231px;background:#c9c9c9"></div>
<svg style="left:926px;top:252px" width="9" height="6" viewBox="0 0 9 6"><path d="M0.8 5.2 L4.5 1.2 L8.2 5.2" stroke="#3c3c3c" stroke-width="1.8" fill="none"/></svg>
<svg style="left:926px;top:658px" width="9" height="6" viewBox="0 0 9 6"><path d="M0.8 0.8 L4.5 4.8 L8.2 0.8" stroke="#3c3c3c" stroke-width="1.8" fill="none"/></svg>
<div class="a" style="left:946px;top:201px;width:9px;height:476px;background:#f0f0f0"></div>
<div class="a" style="left:948px;top:420px;width:3px;height:41px;background:#d6d6d6"></div>
</div>
<!-- ================= RIGHT PANEL ================= -->
<div id="right">
<div class="a" style="left:955px;top:205px;width:312px;height:472px;background:#fff;border:1px solid #c4c4c4"></div>
<div class="phead" style="left:955px;top:205px;width:312px;height:38px"></div>
<div class="t" style="left:966px;top:215px;font-size:15.4px;line-height:20px;height:20px;color:#1e1e1e">Design Layout</div>
<svg style="left:1248px;top:218px" width="9" height="12" viewBox="0 0 9 12"><path d="M2.2 0.6 H6.8 M2.7 0.6 V6 M6.3 0.6 V6 M5.3 0.6 V6 M0.4 6.2 H8.6 M4.5 6.2 V11.6" stroke="#222" stroke-width="1.1" fill="none"/></svg>
<svg style="left:965px;top:256px" width="13" height="13" viewBox="0 0 13 13"><rect x="0.5" y="0.5" width="12" height="12" fill="#b9b9b9" stroke="#868686"/><rect x="1" y="1" width="2" height="2" fill="#fff"/><rect x="4" y="1" width="2" height="2" fill="#fff"/><rect x="7" y="1" width="2" height="2" fill="#fff"/><rect x="10" y="1" width="2" height="2" fill="#fff"/><rect x="1" y="4" width="2" height="2" fill="#d2d2d2"/><rect x="4" y="4" width="2" height="2" fill="#d2d2d2"/><rect x="7" y="4" width="2" height="2" fill="#d2d2d2"/><rect x="10" y="4" width="2" height="2" fill="#d2d2d2"/><rect x="1" y="7" width="2" height="2" fill="#fff"/><rect x="4" y="7" width="2" height="2" fill="#fff"/><rect x="7" y="7" width="2" height="2" fill="#fff"/><rect x="10" y="7" width="2" height="2" fill="#fff"/><rect x="1" y="10" width="2" height="2" fill="#fff"/><rect x="4" y="10" width="2" height="2" fill="#fff"/><rect x="7" y="10" width="2" height="2" fill="#fff"/><rect x="10" y="10" width="2" height="2" fill="#fff"/></svg>
<svg style="left:991px;top:256px" width="13" height="13" viewBox="0 0 13 13"><rect x="0.5" y="0.5" width="12" height="12" fill="#b9b9b9" stroke="#868686"/><rect x="1" y="1" width="2" height="2" fill="#fff"/><rect x="4" y="1" width="2" height="2" fill="#fff"/><rect x="7" y="1" width="2" height="2" fill="#fff"/><rect x="10" y="1" width="2" height="2" fill="#fff"/><rect x="1" y="4" width="2" height="2" fill="#d6d6de"/><rect x="4" y="4" width="2" height="2" fill="#d6d6de"/><rect x="7" y="4" width="2" height="2" fill="#d6d6de"/><rect x="10" y="4" width="2" height="2" fill="#d6d6de"/><rect x="1" y="7" width="2" height="2" fill="#fff"/><rect x="4" y="7" width="2" height="2" fill="#fff"/><rect x="7" y="7" width="2" height="2" fill="#fff"/><rect x="10" y="7" width="2" height="2" fill="#fff"/><rect x="1" y="10" width="2" height="2" fill="#d6d6de"/><rect x="4" y="10" width="2" height="2" fill="#d6d6de"/><rect x="7" y="10" width="2" height="2" fill="#d6d6de"/><rect x="10" y="10" width="2" height="2" fill="#d6d6de"/></svg>
<svg style="left:1017px;top:256px" width="13" height="13" viewBox="0 0 13 13"><rect x="0.5" y="0.5" width="12" height="12" fill="#b9b9b9" stroke="#868686"/><rect x="1" y="1" width="2" height="2" fill="#c9c9d4"/><rect x="4" y="1" width="2" height="2" fill="#c9c9d4"/><rect x="7" y="1" width="2" height="2" fill="#c9c9d4"/><rect x="10" y="1" width="2" height="2" fill="#c9c9d4"/><rect x="1" y="4" width="2" height="2" fill="#c9c9d4"/><rect x="4" y="4" width="2" height="2" fill="#c9c9d4"/><rect x="7" y="4" width="2" height="2" fill="#c9c9d4"/><rect x="10" y="4" width="2" height="2" fill="#c9c9d4"/><rect x="1" y="7" width="2" height="2" fill="#c9c9d4"/><rect x="4" y="7" width="2" height="2" fill="#c9c9d4"/><rect x="7" y="7" width="2" height="2" fill="#c9c9d4"/><rect x="10" y="7" width="2" height="2" fill="#c9c9d4"/><rect x="1" y="10" width="2" height="2" fill="#c9c9d4"/><rect x="4" y="10" width="2" height="2" fill="#c9c9d4"/><rect x="7" y="10" width="2" height="2" fill="#c9c9d4"/><rect x="10" y="10" width="2" height="2" fill="#c9c9d4"/></svg>
<svg style="left:1046px;top:256px" width="13" height="13" viewBox="0 0 13 13"><rect x="0.5" y="0.5" width="12" height="12" fill="#b9b9b9" stroke="#868686"/><rect x="1" y="1" width="2" height="2" fill="#fff"/><rect x="4" y="1" width="2" height="2" fill="#d2d2d2"/><rect x="7" y="1" width="2" height="2" fill="#fff"/><rect x="10" y="1" width="2" height="2" fill="#fff"/><rect x="1" y="4" width="2" height="2" fill="#fff"/><rect x="4" y="4" width="2" height="2" fill="#d2d2d2"/><rect x="7" y="4" width="2" height="2" fill="#fff"/><rect x="10" y="4" width="2" height="2" fill="#fff"/><rect x="1" y="7" width="2" height="2" fill="#fff"/><rect x="4" y="7" width="2" height="2" fill="#d2d2d2"/><rect x="7" y="7" width="2" height="2" fill="#fff"/><rect x="10" y="7" width="2" height="2" fill="#fff"/><rect x="1" y="10" width="2" height="2" fill="#fff"/><rect x="4" y="10" width="2" height="2" fill="#d2d2d2"/><rect x="7" y="10" width="2" height="2" fill="#fff"/><rect x="10" y="10" width="2" height="2" fill="#fff"/></svg>
<div class="a" style="left:1039px;top:248px;width:1px;height:29px;background:#d0d0d0"></div>
<div class="a" style="left:1084px;top:248px;width:1px;height:29px;background:#d0d0d0"></div>
<svg style="left:1067px;top:259px" width="10" height="7" viewBox="0 0 10 7"><path d="M0.8 1 L5 5.4 L9.2 1" stroke="#2a2a2a" stroke-width="1.5" fill="none"/></svg>
<svg style="left:1093px;top:256px" width="16" height="15" viewBox="0 0 16 15"><rect x="0" y="0" width="13" height="2.7" fill="#6e6e6e"/><path d="M0.5 2.6 V11.6 H5.4 M4.6 2.6 V11.6 M8.7 2.6 V7 M13 2.6 V4.4 M0.5 5.7 H10 M0.5 8.8 H7.4 M12.8 10.4 V11.6 H11.6" stroke="#858585" stroke-width="1" fill="none"/><path d="M5.2 13.7 L6.11 10.79 L13.87 3.51 L15.93 5.69 L8.17 12.97 Z" fill="#fff" stroke="#eef8fb" stroke-width="1.6"/><path d="M6.11 10.79 L11.84 5.42 L13.89 7.60 L8.17 12.97 Z" fill="#5a7fa6"/><path d="M12.37 4.92 L13.87 3.51 L15.93 5.69 L14.42 7.10 Z" fill="#5a7fa6"/><path d="M5.2 13.7 L6.11 10.79 L8.17 12.97 Z" fill="#5b6470"/></svg>
<div class="a" style="left:959px;top:279px;width:304px;height:394px;border:1px solid #cfcfcf;background:#fff"></div>
<div class="a" style="left:960px;top:319px;width:302px;height:1px;background:#d4d4d4"></div>
<div class="a" style="left:987px;top:280px;width:1px;height:39px;background:#d4d4d4"></div>
<div class="a" style="left:1037px;top:280px;width:1px;height:39px;background:#d4d4d4"></div>
<div class="a" style="left:1087px;top:280px;width:1px;height:39px;background:#d4d4d4"></div>
<div class="a" style="left:1137px;top:280px;width:1px;height:39px;background:#d4d4d4"></div>
<div class="a" style="left:1197px;top:280px;width:1px;height:39px;background:#d4d4d4"></div>
<div class="a" style="left:1257px;top:280px;width:1px;height:39px;background:#d4d4d4"></div>
<div class="lab c" style="left:987px;top:293px;width:50px;line-height:15.6px">Active</div>
<div class="lab c" style="left:1037px;top:293px;width:50px;line-height:15.6px">Status</div>
<div class="lab c" style="left:1087px;top:285px;width:50px;line-height:15.6px">Item<br>Index</div>
<div class="lab c" style="left:1137px;top:285px;width:60px;line-height:15.6px">Question<br>No.</div>
<div class="lab c" style="left:1197px;top:293px;width:60px;line-height:15.6px">Type</div>
<div class="a" style="left:960px;top:320px;width:302px;height:28px;background:#1193b8"></div>
<div class="a" style="left:987px;top:320px;width:1px;height:28px;background:#bfe6f0"></div>
<div class="a" style="left:1037px;top:320px;width:1px;height:28px;background:#bfe6f0"></div>
<div class="a" style="left:1087px;top:320px;width:1px;height:28px;background:#bfe6f0"></div>
<div class="a" style="left:1137px;top:320px;width:1px;height:28px;background:#bfe6f0"></div>
<div class="a" style="left:1197px;top:320px;width:1px;height:28px;background:#bfe6f0"></div>
<div class="a" style="left:1257px;top:320px;width:1px;height:28px;background:#bfe6f0"></div>
<div class="a" style="left:960px;top:347px;width:302px;height:1px;background:#bfe6f0"></div>
<svg style="left:969px;top:329px" width="6" height="9" viewBox="0 0 6 9"><path d="M0.4 0.4 V8.6 L5.6 4.5Z" fill="#1e2a30"/></svg>
<svg style="left:1005px;top:328px" width="15" height="11" viewBox="0 0 15 11"><path d="M1 5.6 L5.2 9.4 L13.6 1.2" stroke="#fff" stroke-width="1.9" fill="none"/></svg>
<div class="a" style="left:1054.5px;top:326px;width:16px;height:16px;border-radius:50%;background:#1fe41c;border:1px solid #6fe68c"></div>
<div class="lab c" style="left:1087px;top:327px;width:50px;color:#fff">1</div>
<div class="lab c" style="left:1137px;top:327px;width:60px;color:#fff">1</div>
<div class="lab" style="left:1202px;top:327px;color:#fff">Multiple...</div>
<div class="a" style="left:977px;top:655px;width:62px;height:17px;background:#e6e6e6"></div>
<svg style="left:966px;top:659px" width="5" height="8" viewBox="0 0 5 8"><path d="M5 0 L0 4 L5 8Z" fill="#111"/></svg>
<svg style="left:1251px;top:659px" width="5" height="8" viewBox="0 0 5 8"><path d="M0 0 L5 4 L0 8Z" fill="#111"/></svg>
</div>
<!-- ================= STATUS BAR ================= -->
<div id="status">
<div class="a" style="left:0;top:681px;width:1272px;height:29px;background:#e5e5e5"></div>
<div class="st" style="left:10px;letter-spacing:-.25px">Version: 1</div>
<svg style="left:67px;top:693px" width="10" height="8" viewBox="0 0 10 8"><path d="M0 8 L5 0 L10 8Z" fill="#111"/></svg>
<svg style="left:83px;top:693px" width="10" height="8" viewBox="0 0 10 8"><path d="M0 0 L5 8 L10 0Z" fill="#111"/></svg>
<div class="st" style="left:114px">Number of Items: 1</div>
<div class="st" style="left:232px;letter-spacing:-.06px">Number of Questions: 1</div>
<div class="st" style="left:373px">Total Marks: 1</div>
<div class="st" style="left:967px">Memory usage:</div>
<div class="a" style="left:1054px;top:685px;width:200px;height:24px;background:#cacaca;border:1px solid #808080"></div>
<div class="a" style="left:1055px;top:686px;width:19px;height:22px;background:#14e814"></div>
<div class="st c" style="left:1054px;width:200px">10%</div>
<svg style="left:1258px;top:698px;z-index:3" width="12" height="12" viewBox="0 0 12 12"><path d="M10.4 0 V10.4 H0" stroke="#cbcbcb" stroke-width="2.3" fill="none"/></svg>
<div class="a" style="left:0;top:709px;width:1272px;height:4px;background:linear-gradient(#d8f2f7,#9adbe8 50%,#5fc0d4)"></div>
<div class="a" style="left:1267px;top:0;width:5px;height:713px;background:linear-gradient(90deg,rgba(235,251,253,0),rgba(226,248,251,.9) 55%,#a4e7f3)"></div>
</div>
</body>
</html>
